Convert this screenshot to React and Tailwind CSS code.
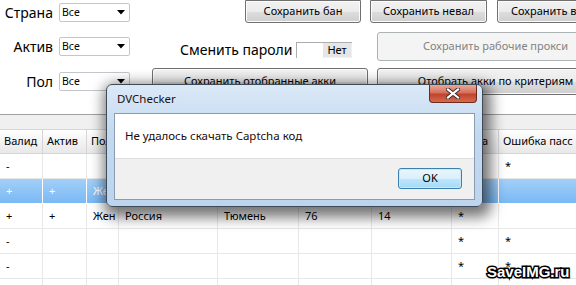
import React from "react";

const Arrow = () => (
  <svg width="8" height="5" viewBox="0 0 8 5" className="shrink-0">
    <path d="M0 0H8L4 4.5Z" fill="#000" />
  </svg>
);

const Select = () => (
  <div className="ml-[6px] w-[71px] h-[19px] shrink-0 border border-[#c4c6cc] rounded-[2px] bg-white flex items-center justify-between pl-[2px] pr-[4px]">
    <span className="text-[10.5px] leading-none text-black">Все</span>
    <Arrow />
  </div>
);

const Btn = ({ children, className = "" }) => (
  <div
    className={
      "shrink-0 border border-[#707070] rounded-[3px] flex items-center justify-center text-[11px] text-black bg-[linear-gradient(#f2f2f2_0%,#ebebeb_50%,#dddddd_51%,#cfcfcf_100%)] shadow-[inset_0_0_0_1px_#fcfcfc] whitespace-nowrap overflow-hidden " +
      className
    }
  >
    {children}
  </div>
);

const DisBtn = ({ children, className = "" }) => (
  <div
    className={
      "shrink-0 border border-[#adb2b5] rounded-[3px] flex items-center justify-center text-[11px] text-[#838383] bg-[#f4f4f4] whitespace-nowrap overflow-hidden " +
      className
    }
  >
    {children}
  </div>
);

const Label = ({ children }) => (
  <div className="w-[53px] shrink-0 text-right text-[14px] leading-none text-black whitespace-nowrap">{children}</div>
);

const cols = "grid grid-cols-[43px_44px_32px_99px_81px_73px_80px_47px_97px]";

const headers = ["Валид", "Актив", "Пол", "Страна", "Город", "Возраст", "Друзья", "Капча", "Ошибка пасс"];

const rows = [
  { sel: false, c: ["-", "", "", "", "", "", "", "", "*"] },
  { sel: true, c: ["+", "+", "Жен", "Россия", "Москва", "25", "10", "", ""] },
  { sel: false, c: ["+", "+", "Жен", "Россия", "Тюмень", "76", "14", "*", ""] },
  { sel: false, c: ["-", "", "", "", "", "", "", "*", "*"] },
  { sel: false, c: ["-", "", "", "", "", "", "", "*", "*"] },
  { sel: false, c: ["", "", "", "", "", "", "", "", ""] },
];

export default function App() {
  return (
    <div className="relative w-[576px] h-[285px] overflow-hidden bg-white font-['Noto_Sans',sans-serif] text-black">
      {/* top controls */}
      <div className="h-[115px] border-b border-[#a0a0a0] flex flex-col overflow-hidden">
        <div className="h-[25px] flex items-center shrink-0">
          <Label>Страна</Label>
          <Select />
          <Btn className="self-start ml-[115px] w-[116px] h-[23px] rounded-t-none">Сохранить бан</Btn>
          <Btn className="self-start ml-[9px] w-[117px] h-[23px] rounded-t-none">Сохранить невал</Btn>
          <Btn className="self-start ml-[10px] w-[120px] h-[23px] rounded-t-none justify-start pl-[13px]">Сохранить валид</Btn>
        </div>
        <div className="mt-[7px] h-[29px] flex items-center shrink-0">
          <Label>Актив</Label>
          <Select />
          <div className="ml-[50px] w-[116px] shrink-0 text-[14px] leading-none mt-[6px] whitespace-nowrap">Сменить пароли</div>
          <div className="w-[56px] h-[16px] mt-[6px] shrink-0 border-l border-t border-[#abadb3] bg-white flex justify-end">
            <div className="w-[29px] h-full bg-[#e6e6e6] border-r border-b border-[#f0f0f0] flex items-center justify-center text-[11px] leading-none">Нет</div>
          </div>
          <DisBtn className="ml-[25px] w-[237px] h-[29px]">Сохранить рабочие прокси</DisBtn>
        </div>
        <div className="mt-[7px] h-[27px] flex items-center shrink-0">
          <Label>Пол</Label>
          <Select />
          <Btn className="ml-[22px] w-[216px] h-[27px]">Сохранить отобранные акки</Btn>
          <Btn className="ml-[9px] w-[237px] h-[27px]">Отобрать акки по критериям</Btn>
        </div>
      </div>
      <div className="h-[14px] bg-[#f0f0f0]" />

      {/* table */}
      <div className={cols + " w-[596px]"}>
        {headers.map((h, i) => (
          <div
            key={i}
            className="h-[25px] border-t border-b border-r border-[#d5d5d5] bg-[linear-gradient(#ffffff,#f3f3f3_50%,#e8e8e8)] flex items-center pl-[4px] text-[11px] whitespace-nowrap overflow-hidden"
          >
            {h}
          </div>
        ))}
        {rows.map((r, ri) =>
          r.c.map((c, ci) => (
            <div
              key={ri + "-" + ci}
              className={
                "h-[25px] border-b border-r flex items-center pl-[6px] text-[11px] whitespace-nowrap overflow-hidden " +
                (r.sel
                  ? "border-white bg-[linear-gradient(#a3cff8,#7ab9f4)] text-white"
                  : "border-[#e8e8e8] bg-white text-black")
              }
            >
              {c}
            </div>
          ))
        )}
      </div>

      {/* dialog */}
      <div className="absolute left-[106px] top-[84px] w-[377px] h-[123px] rounded-[6px] border border-[#3f4a57] bg-[linear-gradient(#dbe9f7,#c3d9f0_40%,#bcd4ee)] shadow-[3px_5px_14px_5px_rgba(0,0,0,0.55)] flex flex-col">
        <div className="h-[28px] shrink-0 flex items-center pl-[10px] text-[11.5px] text-[#1a1010]">DVChecker</div>
        <div className="absolute left-[322px] top-[0px] w-[48px] h-[18px] rounded-b-[4px] border border-[#6b2a20] border-t-0 bg-[linear-gradient(#e9a999,#d4705c_45%,#c2432c_55%,#d66a4d)] flex items-center justify-center">
          <svg width="14" height="11" viewBox="0 0 14 11">
            <path d="M2 1.5L12 9.5M12 1.5L2 9.5" stroke="#3a2a2a" strokeWidth="4" strokeLinecap="square" />
            <path d="M2 1.5L12 9.5M12 1.5L2 9.5" stroke="#fff" strokeWidth="2.2" strokeLinecap="square" />
          </svg>
        </div>
        <div className="mx-[7px] h-[87px] border border-[#8a9cb2] bg-white flex flex-col">
          <div className="h-[45px] border-b border-[#dfdfdf] flex items-center pl-[10px] text-[11.5px] text-[#1e0a0a]">
            Не удалось скачать Captcha код
          </div>
          <div className="flex-1 bg-[#f0f0f0] flex justify-end items-start pt-[9px] pr-[12px]">
            <div className="w-[64px] h-[21px] rounded-[3px] border border-[#3c7fb1] bg-[linear-gradient(#eaf6fd,#d9f0fc_50%,#bee6fd_51%,#a7d9f5)] shadow-[inset_0_0_0_1px_#c9e9fb] flex items-center justify-center text-[11px]">
              OK
            </div>
          </div>
        </div>
      </div>

      {/* watermark */}
      <div className="absolute left-[487px] top-[264px] text-[15px] font-bold leading-none text-white font-['Liberation_Sans',sans-serif] [-webkit-text-stroke:3px_#000] [paint-order:stroke_fill]">
        SaveIMG.ru
      </div>
    </div>
  );
}
